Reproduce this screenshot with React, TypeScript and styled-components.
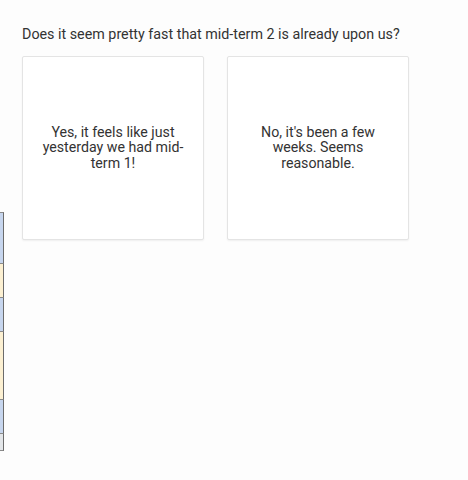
import styled, { createGlobalStyle } from "styled-components";

const GlobalStyle = createGlobalStyle`
  html, body {
    margin: 0;
    padding: 0;
    background: #fdfdfd;
  }
  body {
    font-family: Roboto, "Liberation Sans", sans-serif;
    color: #333;
  }
`;

// Página: faixa lateral + conteúdo
const Page = styled.div`
  display: grid;
  grid-template-columns: 4px 1fr;
  height: 480px;
`;

const Strip = styled.div`
  display: flex;
  flex-direction: column;
  padding-top: 212px;
`;

const Segment = styled.div<{ $h: number; $color: string }>`
  height: ${({ $h }) => $h}px;
  background: ${({ $color }) => $color};
  border-right: 1px solid #6b6b6b;
  border-bottom: 1px solid #8a8a8a;
  box-sizing: border-box;
  &:first-child {
    border-top: 1px solid #8a8a8a;
  }
`;

const Content = styled.div`
  padding: 25px 0 0 18px;
`;

const Question = styled.h2`
  margin: 0 0 13px;
  font-size: 14.3px;
  font-weight: 400;
  line-height: 18px;
  color: #333;
`;

const Choices = styled.div`
  display: flex;
  gap: 23px;
`;

const Card = styled.button`
  width: 182px;
  height: 184px;
  box-sizing: border-box;
  padding: 0 18px;
  display: flex;
  align-items: center;
  justify-content: center;
  background: #fff;
  border: 1px solid #e4e4e4;
  border-radius: 2px;
  box-shadow: 0 1px 2px rgba(0, 0, 0, 0.06);
  font-family: inherit;
  font-size: 14.2px;
  line-height: 15.5px;
  color: #333;
  text-align: center;
  cursor: pointer;
`;

const segments = [
  { h: 52, color: "#c7d6ee" },
  { h: 34, color: "#fcf0d2" },
  { h: 34, color: "#c7d6ee" },
  { h: 68, color: "#fcf0d2" },
  { h: 34, color: "#c7d6ee" },
  { h: 17, color: "#e3e6e9" },
];

export default function App() {
  return (
    <>
      <GlobalStyle />
      <Page>
        <Strip>
          {segments.map((s, i) => (
            <Segment key={i} $h={s.h} $color={s.color} />
          ))}
        </Strip>
        <Content>
          <Question>Does it seem pretty fast that mid-term 2 is already upon us?</Question>
          <Choices>
            <Card>Yes, it feels like just yesterday we had mid-term 1!</Card>
            <Card>No, it's been a few weeks. Seems reasonable.</Card>
          </Choices>
        </Content>
      </Page>
    </>
  );
}
